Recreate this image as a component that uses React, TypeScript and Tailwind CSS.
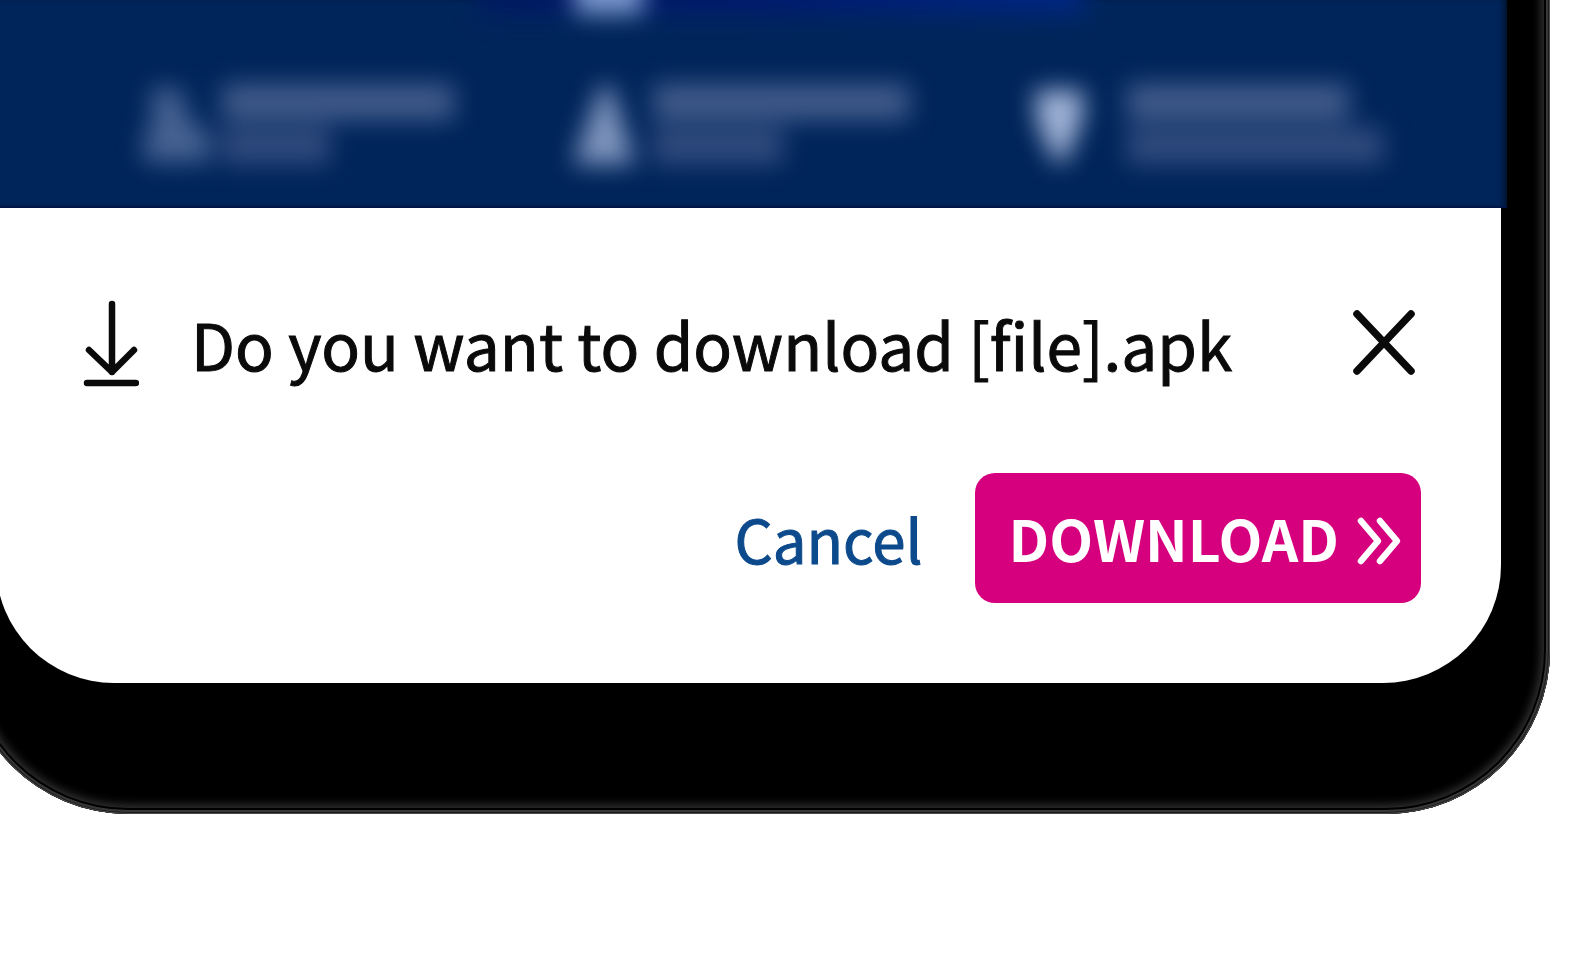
type FeatureProps = {
  icon: string;
  fill: string;
  gap: string;
  lines: [string, string];
};

const features: FeatureProps[] = [
  {
    icon: "M14 4h28l10 34 20 10v30H6V52l8-10z",
    fill: "fill-[#456291]",
    gap: "gap-1",
    lines: ["w-[232px]", "w-[108px]"],
  },
  {
    icon: "M32 2h10l24 78H4z",
    fill: "fill-[#8096bf]",
    gap: "gap-1",
    lines: ["w-[256px]", "w-[130px]"],
  },
  {
    icon: "M12 6h48v28L42 78h-10L14 38z",
    fill: "fill-[#a0b3d6]",
    gap: "gap-6",
    lines: ["w-[222px]", "w-[256px]"],
  },
];

function Feature({ icon, fill, gap, lines }: FeatureProps) {
  return (
    <div className={`flex items-center ${gap}`}>
      <svg viewBox="0 0 80 80" className={`size-20 shrink-0 ${fill}`}>
        <path d={icon} />
      </svg>
      <div className="flex flex-col gap-2">
        <div className={`h-9 bg-[#405b8a] ${lines[0]}`} />
        <div className={`h-9 bg-[#304b7d] ${lines[1]}`} />
      </div>
    </div>
  );
}

function DownloadIcon() {
  return (
    <svg
      viewBox="0 0 56 88"
      className="h-[88px] w-14 shrink-0 fill-none stroke-[#0a0a0a]"
      strokeWidth="6.5"
      strokeLinecap="round"
      strokeLinejoin="round"
      aria-hidden="true"
    >
      <path d="M29 5v68M6 51l23 22 22-22M4 84h49" />
    </svg>
  );
}

function CloseIcon() {
  return (
    <svg
      viewBox="0 0 72 72"
      className="size-[72px] fill-none stroke-[#0a0a0a]"
      strokeWidth="7.5"
      strokeLinecap="round"
    >
      <path d="M8 7l54 57M62 7L8 64" />
    </svg>
  );
}

function ChevronsIcon() {
  return (
    <svg
      viewBox="0 0 48 56"
      className="h-14 w-12 fill-none stroke-white"
      strokeWidth="6.5"
      strokeLinecap="round"
      strokeLinejoin="round"
      aria-hidden="true"
    >
      <path d="M6 11l17 20L6 51M25 11l17 20-17 20" />
    </svg>
  );
}

export default function App() {
  return (
    <div className="min-h-screen overflow-hidden bg-white font-['Noto_Sans_CJK_SC',sans-serif]">
      {/* Phone body, its top edge runs off the page */}
      <div className="-mt-8 mr-[34px] -ml-9 rounded-b-[164px] bg-black pt-8 pr-[49px] pb-[131px] pl-8 shadow-[inset_0_0_0_1px_#4a4a4a,inset_0_0_0_2px_#1c1c1c,inset_0_0_0_4px_#383838,inset_0_0_0_6px_#000,inset_0_0_10px_9px_#333]">
        {/* Blurred page behind the prompt */}
        <div className="-mr-1.5 h-[208px] overflow-hidden border-b-2 border-[#001648] bg-[#00255b] shadow-[inset_-6px_0_6px_-3px_#001028]">
          <div className="relative">
            <div className="absolute -top-12 left-[32%] flex h-[62px] w-2/5 bg-linear-to-r from-[#001a62] via-[#001b70] to-[#002884] pl-[95px] blur-md">
              <div className="h-full w-[68px] bg-[#7d9ad2]" />
            </div>
          </div>
          <div className="flex items-start justify-between pt-[84px] pr-[124px] pl-[142px] blur-md">
            {features.map((f) => (
              <Feature key={f.icon} {...f} />
            ))}
          </div>
        </div>

        {/* Download prompt */}
        <section className="flex flex-col gap-[86px] rounded-b-[118px] bg-white pt-[91px] pr-20 pb-20 pl-[87px]">
          <div className="flex items-center">
            <DownloadIcon />
            <h1 className="ml-[52px] flex-1 text-[64px] leading-[88px] whitespace-nowrap text-[#0a0a0a] [-webkit-text-stroke:1px_#0a0a0a]">
              Do you want to download [file].apk
            </h1>
            <button aria-label="Close">
              <CloseIcon />
            </button>
          </div>

          <div className="flex items-center justify-end gap-[52px]">
            <button className="text-[60px] leading-[88px] text-[#0c4a8c] [-webkit-text-stroke:1px_#0c4a8c]">
              Cancel
            </button>
            <button className="flex h-[130px] items-center gap-4 rounded-[20px] bg-[#d6007f] pr-[18px] pl-[34px] text-[57px] font-bold text-white">
              DOWNLOAD
              <ChevronsIcon />
            </button>
          </div>
        </section>
      </div>
    </div>
  );
}
